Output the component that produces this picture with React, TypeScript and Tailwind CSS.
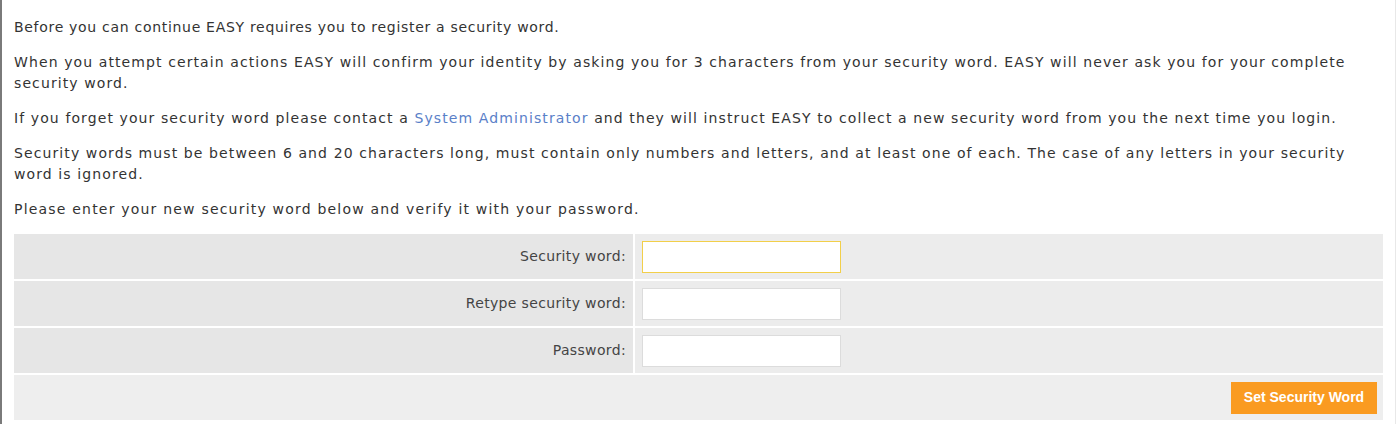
import React from "react";

const FIELDS = ["Security word:", "Retype security word:", "Password:"];

export default function App() {
  return (
    <div
      className="w-[1396px] h-[424px] border-l-2 border-l-[#7a7a7a] border-r border-r-[#e8e8e8] bg-white px-3 pt-[17px] text-[14px] leading-[21px] tracking-[1.1px] text-[#333]"
      style={{ fontFamily: '"DejaVu Sans", Verdana, sans-serif' }}
    >
      <p className="mb-[14px] tracking-[0.7px]">
        Before you can continue EASY requires you to register a security word.
      </p>
      <p className="mb-[14px]">
        When you attempt certain actions EASY will confirm your identity by
        asking you for 3 characters from your security word. EASY will never ask
        you for your complete security word.
      </p>
      <p className="mb-[14px]">
        If you forget your security word please contact a{" "}
        <a href="#" className="text-[#5a80c8]">
          System Administrator
        </a>{" "}
        and they will instruct EASY to collect a new security word from you the
        next time you login.
      </p>
      <p className="mb-[14px]">
        Security words must be between 6 and 20 characters long, must contain
        only numbers and letters, and at least one of each. The case of any
        letters in your security word is ignored.
      </p>
      <p className="mb-[14px] tracking-[1.2px]">
        Please enter your new security word below and verify it with your
        password.
      </p>

      <div className="flex flex-col gap-[2px] tracking-normal">
        {FIELDS.map((label, i) => (
          <div key={label} className="flex h-[45px] gap-[2px]">
            <div className="flex w-[619px] items-center justify-end bg-[#e6e6e6] pr-[7px] tracking-[0.35px] text-[#444]">
              {label}
            </div>
            <div className="flex flex-1 items-center bg-[#ececec] pl-[7px]">
              <input
                type={i === 2 ? "password" : "text"}
                className={
                  "h-[32px] w-[199px] bg-white outline-none " +
                  (i === 0
                    ? "border border-[#f2cf4a]"
                    : "border border-[#dcdcdc]")
                }
              />
            </div>
          </div>
        ))}
        <div className="flex h-[45px] items-center justify-end bg-[#eeeeee] pr-[6px]">
          <button
            className="h-[32px] w-[146px] bg-[#fa9b21] text-[14px] font-bold text-white"
            style={{ fontFamily: '"Liberation Sans", Arial, sans-serif' }}
          >
            Set Security Word
          </button>
        </div>
      </div>
    </div>
  );
}
